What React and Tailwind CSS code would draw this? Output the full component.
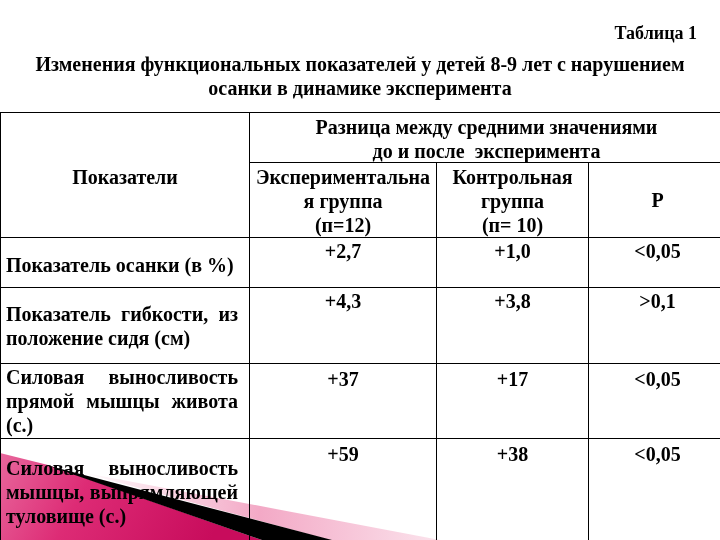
import React from "react";

const J = "block text-justify [text-align-last:justify]";
const L = "block text-left";

function Val({ children, className = "" }) {
  return (
    <div className={"border-r border-b border-black text-center pt-[1px] " + className}>
      {children}
    </div>
  );
}

function Left({ children }) {
  return (
    <div className="border-r border-b border-black flex flex-col justify-center pl-[5px] pr-[11px]">
      {children}
    </div>
  );
}

export default function App() {
  return (
    <div className="relative w-[720px] h-[540px] overflow-hidden bg-white text-black [font-family:'Times_New_Roman','Liberation_Serif','DejaVu_Serif',serif] font-bold">
      <div className="relative">
        <div className="pt-[21px] pr-[23px] text-right text-[18px] leading-[24px]">
          Таблица 1
        </div>
        <div className="mt-[7px] text-center text-[20px] leading-[24px]">
          <div>Изменения функциональных показателей у детей 8-9 лет с нарушением</div>
          <div>осанки в динамике эксперимента</div>
        </div>

        <div className="mt-[12px] w-[726px] border-t border-l border-black grid grid-cols-[249px_187px_152px_138px] grid-rows-[50px_75px_50px_76px_75px_106px] text-[20px] leading-[24px]">
          <div className="row-span-2 border-r border-b border-black flex items-center justify-center pt-[3px]">
            Показатели
          </div>
          <div className="col-span-3 border-b border-black text-center pt-[2px] pr-[4px]">
            <div>Разница между средними значениями</div>
            <div>до и после&nbsp; эксперимента</div>
          </div>
          <div className="border-r border-b border-black text-center pt-[2px]">
            <div>Экспериментальна</div>
            <div>я группа</div>
            <div>(п=12)</div>
          </div>
          <div className="border-r border-b border-black text-center pt-[2px]">
            <div>Контрольная</div>
            <div>группа</div>
            <div>(п= 10)</div>
          </div>
          <div className="border-r border-b border-black flex items-center justify-center">
            Р
          </div>

          <Left>
            <span className={L + " pt-[4px]"}>Показатель осанки (в %)</span>
          </Left>
          <Val>+2,7</Val>
          <Val>+1,0</Val>
          <Val>&lt;0,05</Val>

          <Left>
            <span className={J}>Показатель гибкости, из</span>
            <span className={L}>положение сидя (см)</span>
          </Left>
          <Val>+4,3</Val>
          <Val>+3,8</Val>
          <Val>&gt;0,1</Val>

          <Left>
            <span className={J}>Силовая выносливость</span>
            <span className={J}>прямой мышцы живота</span>
            <span className={L}>(с.)</span>
          </Left>
          <Val className="pt-[3px]">+37</Val>
          <Val className="pt-[3px]">+17</Val>
          <Val className="pt-[3px]">&lt;0,05</Val>

          <Left>
            <span className={J}>Силовая выносливость</span>
            <span className={J}>мышцы, выпрямляющей</span>
            <span className={L}>туловище (с.)</span>
          </Left>
          <Val className="pt-[3px]">+59</Val>
          <Val className="pt-[3px]">+38</Val>
          <Val className="pt-[3px]">&lt;0,05</Val>
        </div>
      </div>

      <svg
        className="absolute left-0 top-0 pointer-events-none mix-blend-multiply"
        width="720"
        height="540"
        viewBox="0 0 720 540"
      >
        <defs>
          <linearGradient id="lp" gradientUnits="userSpaceOnUse" x1="200" y1="480" x2="212" y2="540">
            <stop offset="0" stopColor="#ffffff" />
            <stop offset="1" stopColor="#f6bcd2" />
          </linearGradient>
          <linearGradient id="lpx" gradientUnits="userSpaceOnUse" x1="80" y1="0" x2="440" y2="0">
            <stop offset="0" stopColor="#ffffff" />
            <stop offset="0.5" stopColor="#f3a9c6" />
            <stop offset="1" stopColor="#fbe3ec" />
          </linearGradient>
          <linearGradient id="mg" gradientUnits="userSpaceOnUse" x1="0" y1="455" x2="200" y2="560">
            <stop offset="0" stopColor="#e8679c" />
            <stop offset="0.4" stopColor="#dd2b75" />
            <stop offset="1" stopColor="#c80c5c" />
          </linearGradient>
        </defs>
        <polygon points="80,472 440,540 330,540" fill="url(#lpx)" />
        <polygon points="0,453 48,465 262,540 0,540" fill="url(#mg)" />
        <polygon points="46,465 332,540 262,540" fill="#000000" />
      </svg>
    </div>
  );
}
